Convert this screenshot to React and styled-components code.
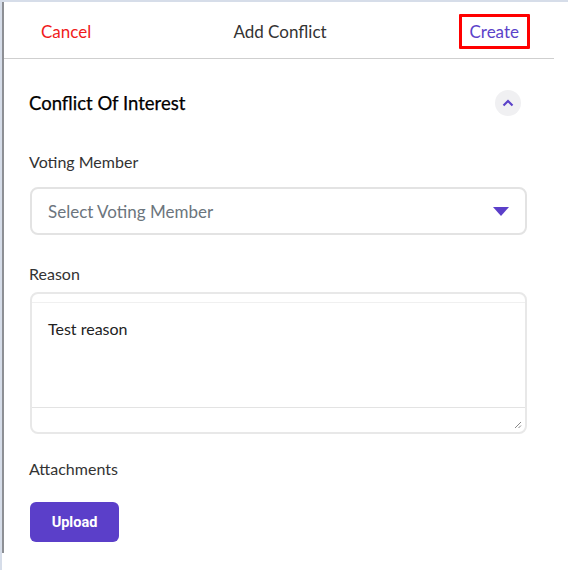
import React from 'react';
import styled, { createGlobalStyle } from 'styled-components';

const GlobalStyle = createGlobalStyle`
  html, body {
    margin: 0;
    padding: 0;
    background: #d6dde9;
  }
  * {
    box-sizing: border-box;
  }
`;

const Page = styled.div`
  padding: 2px 0 0 2px;
  min-height: 100vh;
`;

const Sheet = styled.div`
  background: #fff;
  padding-bottom: 17px;
  min-height: 568px;
`;

const Panel = styled.div`
  border-left: 2px solid #8d8f94;
  height: 551px;
  font-family: Lato, 'Open Sans', sans-serif;
  color: #333;
`;

const Header = styled.div`
  display: grid;
  grid-template-columns: 1fr auto 1fr;
  align-items: center;
  height: 57px;
  width: 550px;
  border-bottom: 1px solid #cfcfcf;
  padding: 2px 24px 0 26px;
`;

const HeaderLink = styled.button`
  background: none;
  border: ${(p) => (p.$boxed ? '3px solid #ff0000' : '3px solid transparent')};
  border-radius: 1px;
  font-family: inherit;
  font-size: 17px;
  color: ${(p) => p.$color};
  padding: 4px 8px;
  justify-self: ${(p) => p.$align};
  cursor: pointer;
`;

const Title = styled.div`
  font-size: 17px;
  color: #333;
`;

const Body = styled.div`
  padding: 21px 27px 0 25px;
  width: 550px;
`;

const SectionHead = styled.div`
  display: flex;
  align-items: center;
  justify-content: space-between;
  height: 46px;
  padding-right: 6px;
`;

const SectionTitle = styled.h2`
  margin: 0;
  font-size: 18.5px;
  font-weight: 400;
  color: #000;
  -webkit-text-stroke: 0.25px #000;
`;

const Toggle = styled.span`
  width: 26px;
  height: 26px;
  border-radius: 50%;
  background: #f0f0f2;
  display: grid;
  place-items: center;
`;

const Field = styled.div`
  margin-top: ${(p) => p.$top}px;
`;

const Label = styled.div`
  font-size: 16px;
  line-height: 20px;
  color: #333;
  margin-bottom: ${(p) => p.$gap}px;
`;

const Select = styled.div`
  height: 48px;
  border: 2px solid #e3e3e3;
  border-radius: 8px;
  display: flex;
  align-items: center;
  justify-content: space-between;
  padding: 0 16px 0 16px;
  font-size: 17px;
  color: #6c757d;
  margin-left: 1px;
`;

const TextBox = styled.div`
  height: 142px;
  border: 2px solid #e8e8e8;
  border-radius: 8px;
  margin-left: 1px;
  display: flex;
  flex-direction: column;
  overflow: hidden;
`;

const TopStrip = styled.div`
  height: 9px;
  border-bottom: 1px solid #f0f0f0;
`;

const TextArea = styled.div`
  flex: 1;
  padding: 16px 16px;
  font-size: 16px;
  color: #222;
`;

const BottomStrip = styled.div`
  height: 25px;
  border-top: 1px solid #e3e3e3;
  display: flex;
  justify-content: flex-end;
  align-items: flex-end;
  padding: 0 3px 3px 0;
`;

const Upload = styled.button`
  width: 89px;
  height: 40px;
  border: none;
  border-radius: 6px;
  background: #5b3fc9;
  color: #fff;
  font-family: Roboto, 'Liberation Sans', sans-serif;
  font-weight: 700;
  font-size: 14.5px;
  margin-left: 1px;
  cursor: pointer;
`;

const App = () => {
  return (
    <>
      <GlobalStyle />
      <Page>
        <Sheet>
          <Panel>
            <Header>
              <HeaderLink $color="#f01b1b" $align="start">Cancel</HeaderLink>
              <Title>Add Conflict</Title>
              <HeaderLink $color="#5b42c9" $align="end" $boxed>Create</HeaderLink>
            </Header>
            <Body>
              <SectionHead>
                <SectionTitle>Conflict Of Interest</SectionTitle>
                <Toggle>
                  <svg width="12" height="8" viewBox="0 0 12 8">
                    <path d="M1.5 6.5 L6 2 L10.5 6.5" fill="none" stroke="#5b42c9" strokeWidth="2.2" />
                  </svg>
                </Toggle>
              </SectionHead>
              <Field $top={26}>
                <Label $gap={15}>Voting Member</Label>
                <Select>
                  <span>Select Voting Member</span>
                  <svg width="16" height="9" viewBox="0 0 16 9">
                    <path d="M0 0 H16 L8 9 Z" fill="#5b3fc9" />
                  </svg>
                </Select>
              </Field>
              <Field $top={29}>
                <Label $gap={8}>Reason</Label>
                <TextBox>
                  <TopStrip />
                  <TextArea>Test reason</TextArea>
                  <BottomStrip>
                    <svg width="9" height="9" viewBox="0 0 9 9">
                      <path d="M8 2 L2 8 M8 5.5 L5.5 8" stroke="#888" strokeWidth="1" />
                    </svg>
                  </BottomStrip>
                </TextBox>
              </Field>
              <Field $top={25}>
                <Label $gap={23}>Attachments</Label>
                <Upload>Upload</Upload>
              </Field>
            </Body>
          </Panel>
        </Sheet>
      </Page>
    </>
  );
};

export default App;
